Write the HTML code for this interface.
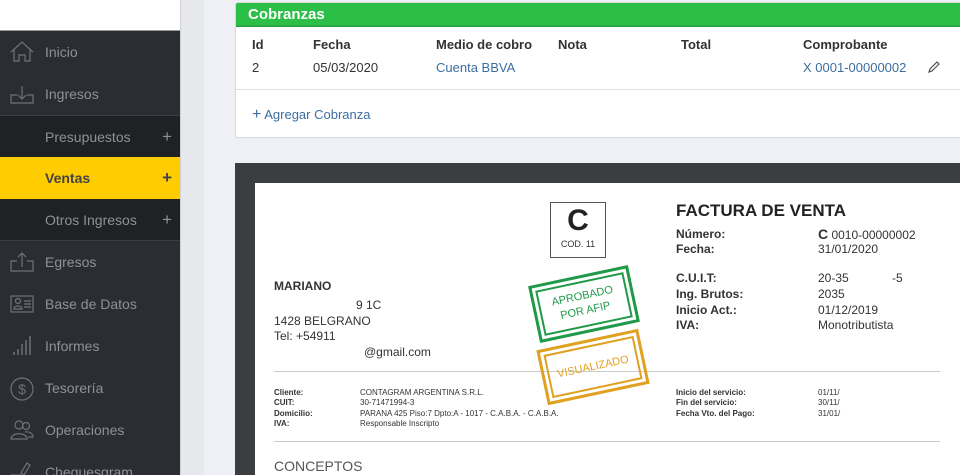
<!DOCTYPE html>
<html style="width:960px;height:475px;overflow:hidden"><head><meta charset="utf-8"><style>
*{margin:0;padding:0;box-sizing:border-box}
body{width:960px;height:475px;overflow:hidden;background:#eef0f5;font-family:"Liberation Sans Narrow","Liberation Sans",sans-serif;position:relative}
.side{position:absolute;left:0;top:0;width:180px;height:475px;background:#2a2d31;overflow:hidden}
.top{position:absolute;left:0;top:0;width:180px;height:31px;background:#fff;border-bottom:1px solid #999}
.it{position:absolute;left:0;width:180px;height:42px;color:#8e9195;font-size:14px;line-height:42px;padding-left:45px}
.sub{background:#1f2124}
.act{background:#ffcc00;color:#444;font-weight:bold}
.plus{position:absolute;right:8px;top:0;font-size:17px}
.ic{position:absolute;left:10px;top:10px}
.strip{position:absolute;left:180px;top:0;width:24px;height:475px;background:#e6e8ec;border-left:1px solid #d0d2d6}
.card{position:absolute;left:235px;top:2px;width:730px;height:136px;background:#fff;border:1px solid #d5d7da;border-radius:3px;overflow:hidden}
.ch{height:24px;background:#2cbf48;color:#fff;font-weight:bold;font-size:15px;line-height:24px;padding-left:12px;border-bottom:2px solid #28a83f}
.t{position:absolute;font-size:13px;color:#333}
.b{font-weight:bold}
.l{color:#3c6ea0}
.dark{position:absolute;left:235px;top:163px;width:730px;height:312px;background:#3b3e41}
.page{position:absolute;left:255px;top:183px;width:710px;height:292px;background:#fff;overflow:hidden}
.p{position:absolute;font-size:12px;color:#333;white-space:nowrap}
.s{font-size:8px}
.hr{position:absolute;left:19px;width:666px;height:1px;background:#ccc}
.stamp{position:absolute;border:3px solid;padding:3px}
.stamp div{border:2px solid;width:100%;height:100%;display:flex;align-items:center;justify-content:center;text-align:center;font-size:11px;line-height:15px}
</style></head><body>
<div class="side">
<div class="top"></div>
<div class="it" style="top:31px"><svg class="ic" width="24" height="22" viewBox="0 0 24 22" fill="none" stroke="#6f7276" stroke-width="1.2"><path d="M1 11L12 1 23 11M4 9v11h5v-6h6v6h5V9"/></svg>Inicio</div>
<div class="it" style="top:73px"><svg class="ic" width="24" height="22" viewBox="0 0 24 22" fill="none" stroke="#6f7276" stroke-width="1.2"><path d="M7 12H1v8h22v-8h-6M12 3v13M8 12l4 4 4-4"/></svg>Ingresos</div>
<div class="it sub" style="top:115px;border-top:1px solid #3a3d41">Presupuestos<span class="plus">+</span></div>
<div class="it act" style="top:157px">Ventas<span class="plus">+</span></div>
<div class="it sub" style="top:199px;border-bottom:1px solid #3a3d41">Otros Ingresos<span class="plus">+</span></div>
<div class="it" style="top:241px"><svg class="ic" width="24" height="22" viewBox="0 0 24 22" fill="none" stroke="#6f7276" stroke-width="1.2"><path d="M7 10H1v10h22V10h-6M12 16V2M8 6l4-4 4 4"/></svg>Egresos</div>
<div class="it" style="top:283px"><svg class="ic" width="24" height="22" viewBox="0 0 24 22" fill="none" stroke="#6f7276" stroke-width="1.2"><rect x="1" y="3" width="22" height="16"/><circle cx="8" cy="8" r="2.5"/><path d="M4 16c0-4 8-4 8 0zM14 8h7M14 11h7M14 14h7"/></svg>Base de Datos</div>
<div class="it" style="top:325px"><svg class="ic" width="24" height="22" viewBox="0 0 24 22" fill="none" stroke="#6f7276" stroke-width="1.5"><path d="M4 20v-3M8 20v-6M12 20V9M16 20V5M20 20V1"/></svg>Informes</div>
<div class="it" style="top:367px"><svg class="ic" width="24" height="24" viewBox="0 0 24 24" fill="none" stroke="#6f7276" stroke-width="1.2"><circle cx="12" cy="12" r="11"/><text x="12" y="17" font-size="14" text-anchor="middle" fill="#6f7276" stroke="none" font-family="Liberation Sans">$</text></svg>Tesorería</div>
<div class="it" style="top:409px"><svg class="ic" width="24" height="22" viewBox="0 0 24 22" fill="none" stroke="#6f7276" stroke-width="1.2"><circle cx="9" cy="6" r="4"/><circle cx="16" cy="7" r="3.5"/><path d="M1 20c0-7 16-7 16 0zM15 13c5-1 8 2 8 5h-5"/></svg>Operaciones</div>
<div class="it" style="top:451px"><svg class="ic" width="24" height="22" viewBox="0 0 24 22" fill="none" stroke="#6f7276" stroke-width="1.2"><path d="M1 20h14M1 20v-6h10M17 2l3 2-6 10-3-2z"/></svg>Chequesgram</div>
</div>
<div class="strip"></div>
<div class="card"><div class="ch">Cobranzas</div>
<span class="t b" style="left:16px;top:34px">Id</span>
<span class="t b" style="left:77px;top:34px">Fecha</span>
<span class="t b" style="left:200px;top:34px">Medio de cobro</span>
<span class="t b" style="left:322px;top:34px">Nota</span>
<span class="t b" style="left:445px;top:34px">Total</span>
<span class="t b" style="left:567px;top:34px">Comprobante</span>
<span class="t" style="left:16px;top:57px">2</span>
<span class="t" style="left:77px;top:57px">05/03/2020</span>
<span class="t l" style="left:200px;top:57px">Cuenta BBVA</span>
<span class="t l" style="left:567px;top:57px">X 0001-00000002</span>
<svg style="position:absolute;left:691px;top:57px" width="14" height="14" viewBox="0 0 14 14" fill="none" stroke="#555" stroke-width="1.2"><path d="M2 12l1-3 7-7 2 2-7 7z"/></svg>
<div style="position:absolute;left:0;top:86px;width:100%;height:1px;background:#ddd"></div>
<span class="t l" style="left:16px;top:103px"><span style="font-size:16px">+</span> Agregar Cobranza</span>
</div>
<div class="dark"></div>
<div class="page">
<div style="position:absolute;left:295px;top:19px;width:56px;height:56px;border:1px solid #555;text-align:center"><div style="font-size:30px;font-weight:bold;line-height:36px;color:#222">C</div><div style="font-size:9px;color:#333">COD. 11</div></div>
<div class="p b" style="left:421px;top:18px;font-size:17px;color:#222">FACTURA DE VENTA</div>
<div class="p b" style="left:421px;top:44px">Número:</div><div class="p" style="left:563px;top:43px"><b style="font-size:14px">C</b> 0010-00000002</div>
<div class="p b" style="left:421px;top:59px">Fecha:</div><div class="p" style="left:563px;top:59px">31/01/2020</div>
<div class="p b" style="left:421px;top:88px">C.U.I.T:</div><div class="p" style="left:563px;top:88px">20-35 &nbsp; &nbsp; &nbsp; &nbsp; &nbsp; &nbsp; -5</div>
<div class="p b" style="left:421px;top:104px">Ing. Brutos:</div><div class="p" style="left:563px;top:104px">2035</div>
<div class="p b" style="left:421px;top:120px">Inicio Act.:</div><div class="p" style="left:563px;top:120px">01/12/2019</div>
<div class="p b" style="left:421px;top:135px">IVA:</div><div class="p" style="left:563px;top:135px">Monotributista</div>
<div class="p b" style="left:19px;top:96px">MARIANO</div>
<div class="p" style="left:101px;top:115px">9 1C</div>
<div class="p" style="left:19px;top:131px">1428 BELGRANO</div>
<div class="p" style="left:19px;top:146px">Tel: +54911</div>
<div class="p" style="left:109px;top:162px">@gmail.com</div>
<div class="hr" style="top:188px"></div>
<div class="p s b" style="left:19px;top:205px">Cliente:</div><div class="p s" style="left:105px;top:205px">CONTAGRAM ARGENTINA S.R.L.</div>
<div class="p s b" style="left:19px;top:215px">CUIT:</div><div class="p s" style="left:105px;top:215px">30-71471994-3</div>
<div class="p s b" style="left:19px;top:226px">Domicilio:</div><div class="p s" style="left:105px;top:226px">PARANA 425 Piso:7 Dpto:A - 1017 - C.A.B.A. - C.A.B.A.</div>
<div class="p s b" style="left:19px;top:236px">IVA:</div><div class="p s" style="left:105px;top:236px">Responsable Inscripto</div>
<div class="p s b" style="left:421px;top:205px">Inicio del servicio:</div><div class="p s" style="left:563px;top:205px">01/11/</div>
<div class="p s b" style="left:421px;top:215px">Fin del servicio:</div><div class="p s" style="left:563px;top:215px">30/11/</div>
<div class="p s b" style="left:421px;top:226px">Fecha Vto. del Pago:</div><div class="p s" style="left:563px;top:226px">31/01/</div>
<div class="hr" style="top:258px"></div>
<div class="p" style="left:19px;top:275px;font-size:14px;color:#555">CONCEPTOS</div>
<div class="stamp" style="left:278px;top:92px;width:102px;height:58px;color:#1f9a48;border-color:#1f9a48;transform:rotate(-12deg)"><div>APROBADO<br>POR AFIP</div></div>
<div class="stamp" style="left:286px;top:156px;width:104px;height:56px;color:#e0a020;border-color:#e0a020;transform:rotate(-12deg)"><div>VISUALIZADO</div></div>
</div>
</body></html>
